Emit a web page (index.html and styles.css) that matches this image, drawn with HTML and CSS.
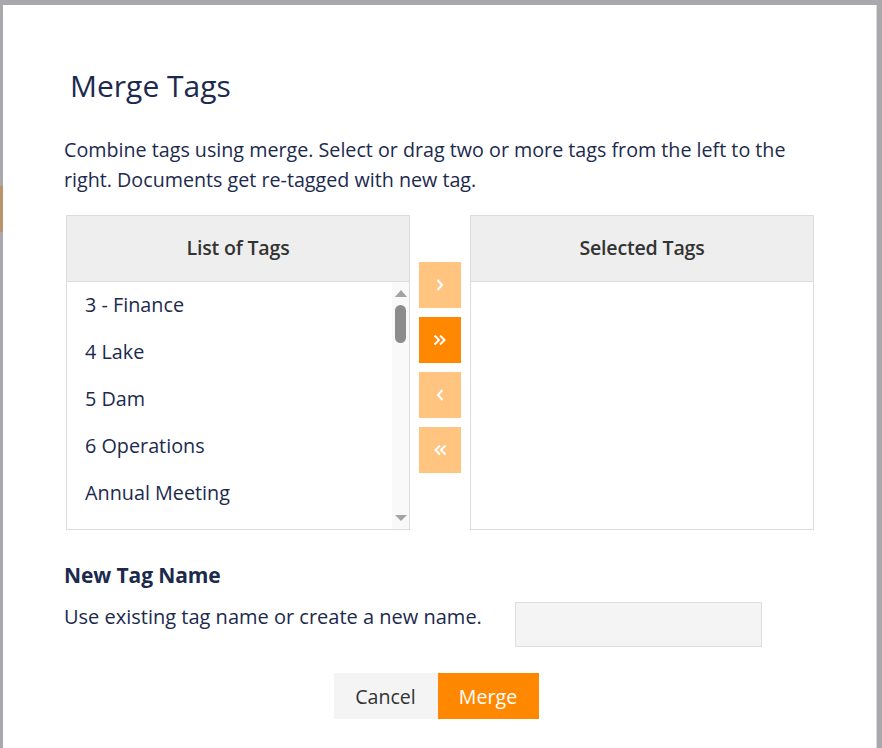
FILE: index.html
```html
<!DOCTYPE html>
<html>
<head>
<meta charset="utf-8">
<title>Merge Tags</title>
<link rel="stylesheet" href="styles.css">
</head>
<body>
<div class="backdrop-spot"></div>
<div class="modal">
  <h1 class="title">Merge Tags</h1>
  <p class="desc">Combine tags using merge. Select or drag two or more tags from the left to the right. Documents get re-tagged with new tag.</p>
  <div class="transfer">
    <div class="panel">
      <div class="panel-head">List of Tags</div>
      <div class="panel-body">
        <ul class="tag-list">
          <li>3 - Finance</li>
          <li>4 Lake</li>
          <li>5 Dam</li>
          <li>6 Operations</li>
          <li>Annual Meeting</li>
        </ul>
        <div class="scrollbar">
          <div class="arrow-up"></div>
          <div class="thumb"></div>
          <div class="track-fill"></div>
          <div class="arrow-down"></div>
        </div>
      </div>
    </div>
    <div class="moves">
      <button class="move light" type="button"><svg width="12" height="14" viewBox="0 0 12 14"><polyline points="3.5,2 8,7 3.5,12" fill="none" stroke="#fff" stroke-width="2.1"/></svg></button>
      <button class="move dark" type="button"><svg width="16" height="14" viewBox="0 0 16 14"><polyline points="2.5,2.5 7,7 2.5,11.5" fill="none" stroke="#fff" stroke-width="2"/><polyline points="8,2.5 12.5,7 8,11.5" fill="none" stroke="#fff" stroke-width="2"/></svg></button>
      <button class="move light" type="button"><svg width="12" height="14" viewBox="0 0 12 14"><polyline points="8.5,2 4,7 8.5,12" fill="none" stroke="#fff" stroke-width="2.1"/></svg></button>
      <button class="move light" type="button"><svg width="16" height="14" viewBox="0 0 16 14"><polyline points="8,2.5 3.5,7 8,11.5" fill="none" stroke="#fff" stroke-width="2"/><polyline points="13.5,2.5 9,7 13.5,11.5" fill="none" stroke="#fff" stroke-width="2"/></svg></button>
    </div>
    <div class="panel">
      <div class="panel-head">Selected Tags</div>
      <div class="panel-body"></div>
    </div>
  </div>
  <h2 class="subtitle">New Tag Name</h2>
  <div class="name-row">
    <div class="name-label">Use existing tag name or create a new name.</div>
    <input class="name-input" type="text">
  </div>
  <div class="actions">
    <button class="btn cancel" type="button">Cancel</button>
    <button class="btn merge" type="button">Merge</button>
  </div>
</div>
</body>
</html>
```
FILE: styles.css
```css
* { box-sizing: border-box; }
html, body {
  margin: 0;
  padding: 0;
  height: 100%;
  overflow: hidden;
}
body {
  background: #a8a8ad;
  font-family: "Open Sans", "Noto Sans", sans-serif;
  color: #1c2a4e;
  position: relative;
}
.backdrop-spot {
  position: absolute;
  left: 0;
  top: 186px;
  width: 3px;
  height: 46px;
  background: #b8956c;
}
.modal {
  margin: 5px 0 0 3px;
  width: 874px;
  height: 743px;
  background: #fff;
  padding: 61px 0 0 61px;
  border-right: 1px solid #d8d8da;
}
.title {
  margin: 0 0 29px 6px;
  font-size: 30px;
  line-height: 40px;
  font-weight: 400;
  color: #1c2a4e;
}
.desc {
  margin: 0 0 20px 0;
  width: 760px;
  font-size: 19.7px;
  line-height: 30px;
}
.transfer {
  display: flex;
  margin-left: 2px;
}
.panel {
  width: 344px;
  height: 315px;
  border: 1px solid #dcdcdc;
  display: flex;
  flex-direction: column;
}
.panel-head {
  height: 66px;
  background: #eeeeee;
  border-bottom: 1px solid #dcdcdc;
  text-align: center;
  font-size: 19.6px;
  font-weight: 600;
  line-height: 63px;
  color: #333;
  letter-spacing: -0.2px;
}
.panel-body {
  flex: 1;
  display: flex;
  overflow: hidden;
}
.tag-list {
  list-style: none;
  margin: 0;
  padding: 0 0 0 18px;
  flex: 1;
}
.tag-list li {
  height: 47px;
  line-height: 46px;
  font-size: 19.8px;
  color: #1c2a4e;
}
.scrollbar {
  width: 17px;
  background: #f9f9f9;
  display: flex;
  flex-direction: column;
  align-items: center;
  padding: 8px 0 8px 0;
}
.arrow-up {
  width: 0;
  height: 0;
  border-left: 6px solid transparent;
  border-right: 6px solid transparent;
  border-bottom: 7px solid #a3a3a3;
}
.arrow-down {
  width: 0;
  height: 0;
  border-left: 6px solid transparent;
  border-right: 6px solid transparent;
  border-top: 6px solid #a3a3a3;
}
.thumb {
  margin-top: 8px;
  width: 11px;
  height: 38px;
  border-radius: 6px;
  background: #8c8c8c;
}
.track-fill { flex: 1; }
.moves {
  width: 60px;
  padding: 47px 9px 0 9px;
  display: flex;
  flex-direction: column;
  gap: 9px;
}
.move {
  width: 42px;
  height: 46px;
  border: 0;
  padding: 0;
  display: flex;
  align-items: center;
  justify-content: center;
}
.move.light { background: #ffc47f; }
.move.dark { background: #ff8800; }
.subtitle {
  margin: 30px 0 12px 0;
  font-size: 21px;
  line-height: 30px;
  font-weight: 700;
  letter-spacing: -0.1px;
}
.name-row {
  display: flex;
  align-items: flex-start;
}
.name-label {
  width: 451px;
  font-size: 20px;
  line-height: 30px;
}
.name-input {
  width: 247px;
  height: 45px;
  background: #f4f4f4;
  border: 1px solid #dedede;
  margin: 0;
  padding: 0 10px;
  font-family: inherit;
}
.actions {
  margin-top: 26px;
  width: 750px;
  display: flex;
  justify-content: center;
  padding-right: 6px;
}
.btn {
  height: 46px;
  border: 0;
  font-family: inherit;
  font-size: 19.6px;
  padding: 0;
}
.cancel {
  width: 104px;
  background: #f4f4f4;
  color: #333;
}
.merge {
  width: 101px;
  background: #ff8800;
  color: #fff;
}
```
